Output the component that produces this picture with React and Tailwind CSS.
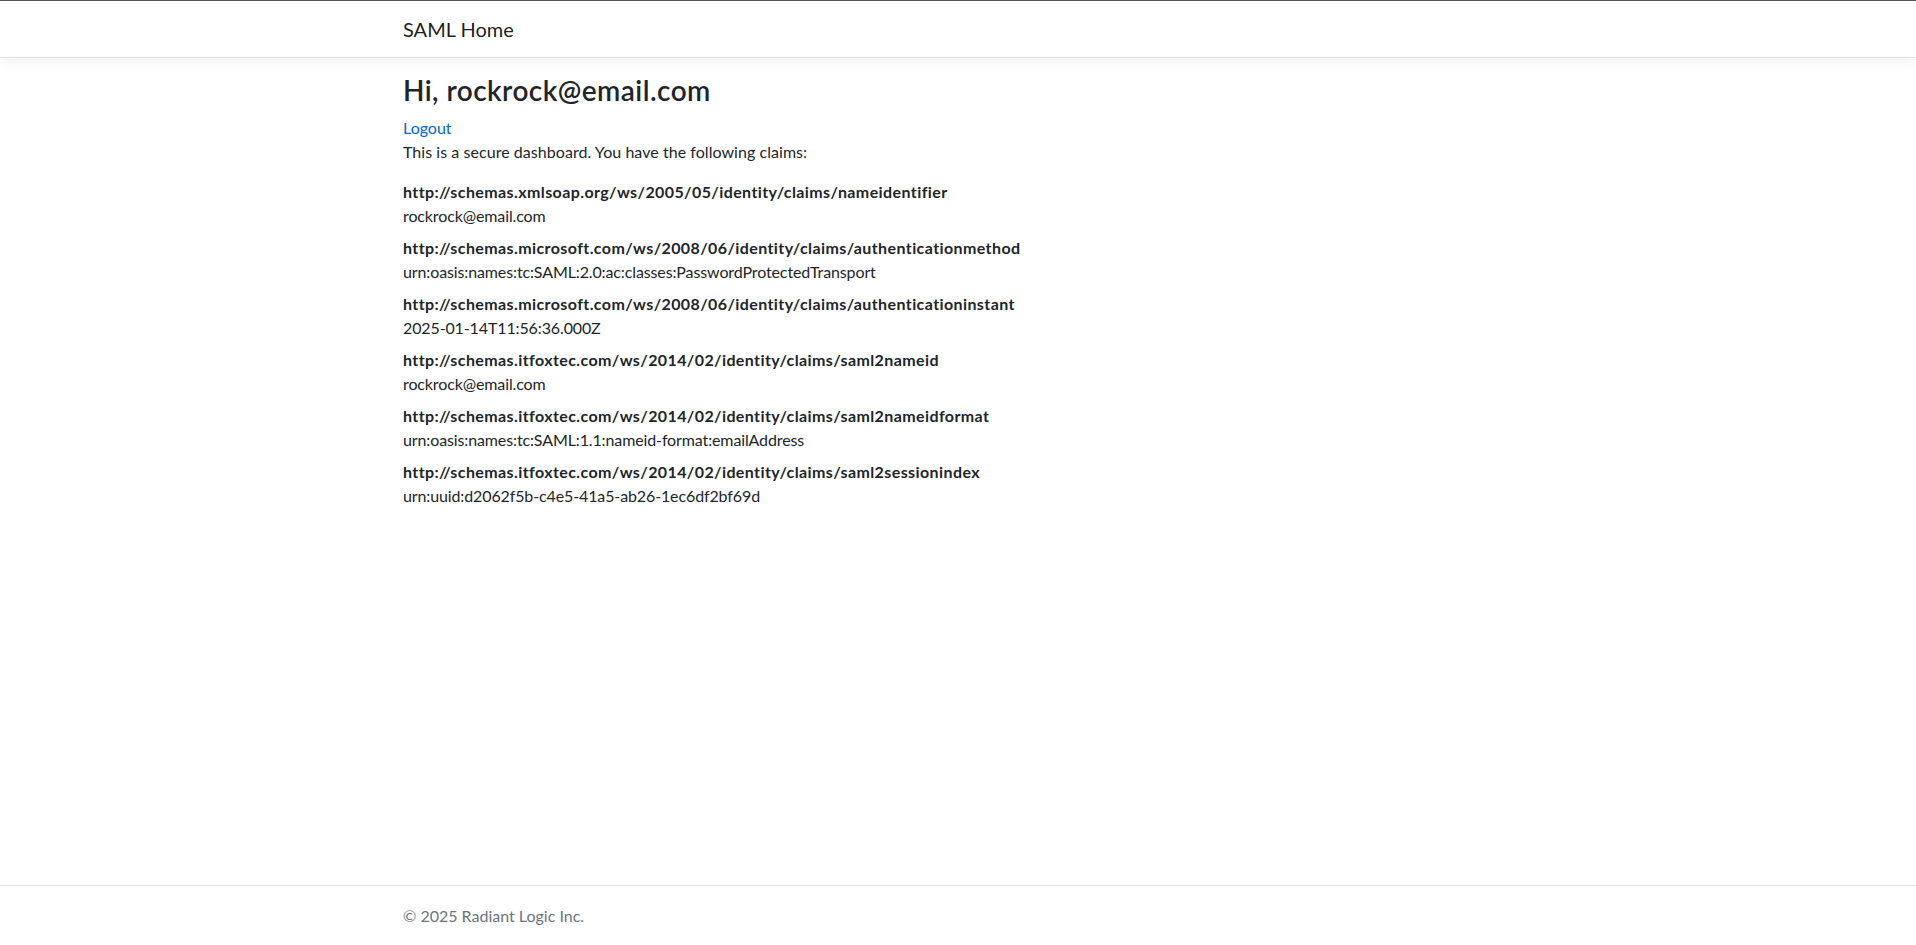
export default function App() {
  const claims = [
    ["http://schemas.xmlsoap.org/ws/2005/05/identity/claims/nameidentifier", "rockrock@email.com"],
    ["http://schemas.microsoft.com/ws/2008/06/identity/claims/authenticationmethod", "urn:oasis:names:tc:SAML:2.0:ac:classes:PasswordProtectedTransport"],
    ["http://schemas.microsoft.com/ws/2008/06/identity/claims/authenticationinstant", "2025-01-14T11:56:36.000Z"],
    ["http://schemas.itfoxtec.com/ws/2014/02/identity/claims/saml2nameid", "rockrock@email.com"],
    ["http://schemas.itfoxtec.com/ws/2014/02/identity/claims/saml2nameidformat", "urn:oasis:names:tc:SAML:1.1:nameid-format:emailAddress"],
    ["http://schemas.itfoxtec.com/ws/2014/02/identity/claims/saml2sessionindex", "urn:uuid:d2062f5b-c4e5-41a5-ab26-1ec6df2bf69d"],
  ];
  return (
    <div
      className="min-h-screen flex flex-col bg-white text-[#212529] text-[16px] leading-[24px]"
      style={{ fontFamily: "Lato, 'Noto Sans', sans-serif" }}
    >
      <header className="border-t border-t-[#555555] border-b border-b-[#dee2e6] bg-white shadow-[0_4px_12px_rgba(0,0,0,0.05)] mb-4">
        <div className="w-[1140px] mx-auto px-[15px] h-[56px] flex items-center">
          <a className="text-[20px] leading-[30px] text-[rgba(0,0,0,0.9)]">SAML Home</a>
        </div>
      </header>
      <main className="flex-1">
        <div className="w-[1140px] mx-auto px-[15px]">
          <h3 className="text-[28px] leading-[33.6px] font-semibold mb-2 tracking-[0.45px]">Hi, rockrock@email.com</h3>
          <a className="block text-[#0366d6]">Logout</a>
          <p className="mb-4 tracking-[0.05px]">This is a secure dashboard. You have the following claims:</p>
          <dl>
            {claims.map(([k, v]) => (
              <div key={k}>
                <dt className="font-bold tracking-[0.4px]">{k}</dt>
                <dd className="mb-2 tracking-[-0.12px]">{v}</dd>
              </div>
            ))}
          </dl>
        </div>
      </main>
      <footer className="border-t border-t-[#dee2e6] h-[60px] leading-[60px] text-[#6c757d] whitespace-nowrap">
        <div className="w-[1140px] mx-auto px-[15px]">© 2025 Radiant Logic Inc.</div>
      </footer>
    </div>
  );
}
